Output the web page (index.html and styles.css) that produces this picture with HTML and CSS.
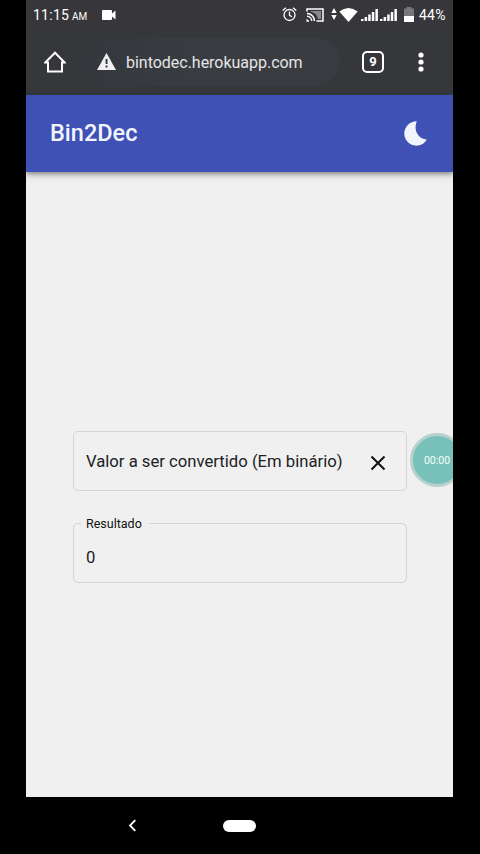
FILE: index.html
```html
<!DOCTYPE html>
<html lang="pt-BR">
<head>
<meta charset="utf-8">
<title>Bin2Dec</title>
<link rel="stylesheet" href="styles.css">
</head>
<body>
<div class="phone">
  <div class="status">
    <span class="clock">11:15</span><span class="ampm">AM</span>
    <svg class="camera" width="14" height="10" viewBox="0 0 14 10"><path fill="#fff" d="M1 0h8q1 0 1 1v2.500L13.500 .5v9L10 6.500V9q0 1-1 1H1Q0 10 0 9V1Q0 0 1 0z"/></svg>
    <svg class="alarm" width="15" height="15" viewBox="0 0 15 15" fill="none" stroke="#fff" stroke-width="1.300"><circle cx="7.500" cy="8" r="5.500"/><path d="M.7 3.500 4 .8M14.300 3.500 11 .8M7.500 4.500V8.300l2.500 1.500"/></svg>
    <svg class="cast" width="18" height="14" viewBox="0 0 18 14" fill="none" stroke="#fff" stroke-width="1.500"><path d="M1 3.500V1h16v12h-6.500"/><path fill="#8a8a8c" stroke="none" d="M5 3h10v8h-3Q11 5 5 4z"/><path d="M1 5.500a7.500 7.500 0 0 1 7.500 7.500M1 8.300A4.700 4.700 0 0 1 5.700 13"/><path fill="#fff" stroke="none" d="M.5 11v2.700h2.700Q3 11.500.5 11z"/></svg>
    <svg class="arrows" width="6" height="12" viewBox="0 0 6 12" fill="#fff"><path d="M3 0l2.700 5H.3zM3 12L.3 7h5.400z"/></svg>
    <svg class="wifi" width="19" height="14" viewBox="0 0 19 14"><path fill="#fff" d="M.3 3.500Q9.500-3.500 18.700 3.500L9.500 14z"/></svg>
    <svg class="signal" width="17" height="12" viewBox="0 0 17 12" fill="#fff"><path d="M0 10h2.500v2H0zM3.600 8H6.100v4H3.600zM7.200 5.500h2.500V12H7.200zM10.800 3h2.500v9h-2.500zM14.400 0h2.500v12h-2.500z"/></svg>
    <svg class="signal second" width="17" height="12" viewBox="0 0 17 12" fill="#fff"><path d="M0 10h2.500v2H0zM3.600 8H6.100v4H3.600zM7.200 5.500h2.500V12H7.200zM10.800 3h2.500v9h-2.500zM14.400 0h2.500v12h-2.500z"/></svg>
    <svg class="battery" width="10" height="15" viewBox="0 0 10 15"><path fill="#77777a" d="M2.500 0h5v1.500H10V9H0V1.500h2.500z"/><path fill="#fff" d="M0 9h10v6H0z"/></svg>
    <span class="percent">44%</span>
  </div>
  <div class="browser">
    <svg class="home" width="22" height="22" viewBox="0 0 22 22" fill="none" stroke="#fff" stroke-width="2"><path d="M1.300 11.500 11 1.700l9.700 9.800H18V20.500H4V11.500z"/></svg>
    <div class="address">
      <svg width="19" height="17" viewBox="0 0 19 17"><path fill="#f1f1f1" d="M9.500 0 19 17H0z"/><path fill="#34363a" d="M8.600 6h1.900v5H8.600zM8.600 12.500h1.900v2H8.600z"/></svg>
      <span>bintodec.herokuapp.com</span>
    </div>
    <div class="tabs">9</div>
    <svg class="menu" width="6" height="20" viewBox="0 0 6 20" fill="#fff"><circle cx="3" cy="3" r="2.600"/><circle cx="3" cy="10" r="2.600"/><circle cx="3" cy="17" r="2.600"/></svg>
  </div>
  <header class="appbar">
    <h1>Bin2Dec</h1>
    <svg width="23" height="25" viewBox="0 0 23 25"><path fill="#f2f5fd" d="M12.800.3C6 .3.300 5.800.3 12.600.3 19.300 5.800 24.700 12.300 24.700c4.500 0 8.400-2.300 10.400-6.200C15.500 18.300 8.800 10.500 12.800.3z"/></svg>
  </header>
  <main>
    <div class="field input">
      <span>Valor a ser convertido (Em binário)</span>
      <svg width="16" height="16" viewBox="0 0 16 16" stroke="#111" stroke-width="2"><path d="M1.500 1.500l13 13M14.500 1.500l-13 13"/></svg>
    </div>
    <fieldset class="field result">
      <legend>Resultado</legend>
      <span>0</span>
    </fieldset>
    <div class="timer">00:00</div>
  </main>
  <nav>
    <svg width="9" height="13" viewBox="0 0 9 13" fill="none" stroke="#fff" stroke-width="1.800"><path d="M7.300 1.200 2 6.500l5.300 5.300"/></svg>
    <div class="pill"></div>
  </nav>
</div>
</body>
</html>
```
FILE: styles.css
```css
* { box-sizing: border-box; }
body {
  margin: 0;
  background: #000;
  font-family: Roboto, "Liberation Sans", sans-serif;
}
svg { display: block; flex: none; }
.phone {
  width: 427px;
  height: 854px;
  margin-left: 26px;
  display: flex;
  flex-direction: column;
  overflow: hidden;
}
.status {
  height: 29px;
  flex: none;
  background: #37373b;
  color: #fff;
  display: flex;
  align-items: center;
  padding-left: 7px;
  white-space: nowrap;
}
.clock { width: 39px; font-size: 14px; line-height: 29px; letter-spacing: .25px; padding-top: 1px; }
.ampm { width: 30px; font-size: 10px; line-height: 29px; padding-top: 3px; }
.alarm { margin-left: 166px; }
.cast { margin-left: 9px; }
.arrows { margin: 0 0 2px 7px; }
.wifi { margin-left: 2px; }
.signal { margin-left: 3px; }
.second { margin-left: 2px; }
.battery { margin-left: 7px; }
.percent { margin-left: 5px; font-size: 14px; letter-spacing: .2px; padding-top: 1px; }
.browser {
  height: 66px;
  flex: none;
  background: #36373b;
  border-bottom: 1px solid #343a3e;
  display: flex;
  align-items: center;
  padding-left: 18px;
}
.address {
  width: 256px;
  height: 48px;
  margin-left: 18px;
  padding-left: 13px;
  border-radius: 24px;
  background: linear-gradient(90deg, #34383c, #393c41 50%, #3a3b40);
  display: flex;
  align-items: center;
  gap: 10px;
  color: #e4e5e7;
  font-size: 16px;
}
.address span { padding-top: 1px; letter-spacing: -.02px; }
.tabs {
  width: 22px;
  height: 22px;
  margin-left: 22px;
  border: 2px solid #fff;
  border-radius: 5px;
  color: #fff;
  font-size: 13px;
  font-weight: 700;
  line-height: 18px;
  text-align: center;
}
.menu { margin-left: 34px; }
.appbar {
  position: relative;
  z-index: 1;
  height: 77px;
  flex: none;
  background: #3f51b5;
  box-shadow: 0 2px 4px rgba(0,0,0,.3), 0 3px 8px rgba(0,0,0,.18);
  display: flex;
  align-items: center;
  justify-content: space-between;
  padding: 0 26px 0 24px;
}
h1 {
  margin: 0 0 1px;
  color: #f2f5fd;
  font-size: 23.5px;
  font-weight: 500;
}
main {
  position: relative;
  height: 625px;
  flex: none;
  background: #f0f0f0;
  padding: 259px 46px 0 47px;
}
.field {
  height: 60px;
  border: 1px solid #d4d4d4;
  border-radius: 5px;
  color: #202124;
  font-size: 16.7px;
}
.input {
  display: flex;
  align-items: center;
  justify-content: space-between;
  padding: 0 20px 0 12px;
}
.input span { letter-spacing: -.01px; }
.input svg { margin-top: 4px; }
.result {
  height: 67px;
  margin: 25px 0 0;
  padding: 0 7px;
}
legend {
  padding: 1px 7px 0 5px;
  color: #111;
  font-size: 12.5px;
  line-height: 14px;
}
.result span {
  display: block;
  padding: 16px 0 0 5px;
  line-height: 22px;
}
.timer {
  position: absolute;
  left: 384px;
  top: 261px;
  width: 54px;
  height: 54px;
  border: 3px solid #b7d1ce;
  border-radius: 50%;
  background: #78c1b9;
  color: #f4ffff;
  font-size: 10.5px;
  line-height: 50px;
  text-align: center;
}
nav {
  height: 57px;
  background: #000;
  display: flex;
  align-items: center;
  padding-left: 102px;
}
.pill {
  width: 33px;
  height: 12px;
  margin-left: 86px;
  border-radius: 6px;
  background: #fff;
}
```
